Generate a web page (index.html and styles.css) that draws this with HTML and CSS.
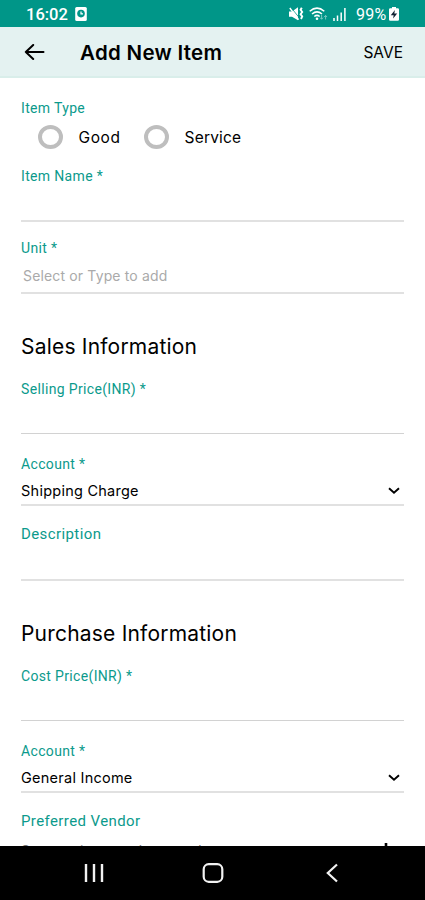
FILE: index.html
```html
<!DOCTYPE html>
<html lang="en">
<head>
<meta charset="utf-8">
<meta name="viewport" content="width=device-width, initial-scale=1">
<title>Add New Item</title>
<link rel="stylesheet" href="styles.css">
</head>
<body>
<div class="screen">
  <header class="status">
    <span class="clock">16:02</span>
    <svg class="alarm" width="12" height="14" viewBox="0 0 12 14"><rect x=".2" y="0" width="11.6" height="14" rx="1.5" fill="#fff"/><circle cx="6" cy="6.6" r="3.8" fill="#009688"/><path d="M6 4.4V6.8H8" fill="none" stroke="#fff" stroke-width="1.2"/></svg>
    <svg class="mute" width="15" height="14" viewBox="0 0 15 14"><path d="M0 4.5H3L9 .3V13.2L3 9.8H0Z" fill="#fff"/><path d="M2 .6L10.5 11" stroke="#009688" stroke-width=".8"/><path d="M.8 1L9.6 12.6" stroke="#fff" stroke-width="1.4"/><path d="M12.8 .8L11.6 2.8 13.2 5 11.6 7.2 13.2 9.4 12 12" fill="none" stroke="#fff" stroke-width="1.9"/></svg>
    <svg class="wifi" width="19" height="14" viewBox="0 0 19 14"><path d="M.7 4.3Q8 -2 15.3 4.3M3 7Q8 2.8 13 7M5.3 9.5Q8 7.2 10.7 9.5" fill="none" stroke="#fff" stroke-width="1.5"/><circle cx="8" cy="11.8" r="1.3" fill="#fff"/><path d="M12.6 8V12M11.2 10.7L12.6 12.3 14 10.7M16.6 12.5V8.5M15.2 10L16.6 8.4 18 10" fill="none" stroke="#79c8c0" stroke-width="1"/></svg>
    <svg class="signal" width="13" height="13" viewBox="0 0 13 13"><path d="M1 10V13M4.5 7.5V13M8.2 4.5V13M11.9 0V13" stroke="#fff" stroke-width="1.5"/></svg>
    <span class="charge">99%</span>
    <svg class="battery" width="10" height="14" viewBox="0 0 9 14" preserveAspectRatio="none"><path d="M2.7 0H6.3V1.3H7.8Q9 1.3 9 2.5V12.5Q9 13.7 7.8 13.7H1.2Q0 13.7 0 12.5V2.5Q0 1.3 1.2 1.3H2.7Z" fill="#fff"/><path d="M5.3 3L1.6 8.2H4.2L3.7 11.6 7.4 6.5H4.8Z" fill="#123"/></svg>
  </header>
  <div class="appbar">
    <svg class="back" width="21" height="18" viewBox="0 0 21 18"><path d="M19.5 8H1.8M9.2 1L1.8 8 9.2 15" fill="none" stroke="#000" stroke-width="2" stroke-linecap="round" stroke-linejoin="round"/></svg>
    <h1 class="title">Add New Item</h1>
    <button class="save">SAVE</button>
  </div>
  <main class="form">
    <div class="label type-label">Item Type</div>
    <div class="radios">
      <span class="radio"></span><span class="good">Good</span>
      <span class="radio"></span><span class="service">Service</span>
    </div>
    <div class="field name"><div class="label">Item Name *</div></div>
    <div class="field unit"><div class="label">Unit *</div><div class="value hint">Select or Type to add</div></div>
    <h2 class="sales">Sales Information</h2>
    <div class="field price"><div class="label">Selling Price(INR) *</div></div>
    <div class="field account"><div class="label">Account *</div><div class="value"><span class="shipping">Shipping Charge</span><svg width="12" height="8" viewBox="0 0 12 8"><path d="M1 1.3L6 5.8 11 1.3" fill="none" stroke="#000" stroke-width="1.9"/></svg></div></div>
    <div class="field description"><div class="label large">Description</div></div>
    <h2 class="purchase">Purchase Information</h2>
    <div class="field price"><div class="label">Cost Price(INR) *</div></div>
    <div class="field account"><div class="label">Account *</div><div class="value"><span class="income">General Income</span><svg width="12" height="8" viewBox="0 0 12 8"><path d="M1 1.3L6 5.8 11 1.3" fill="none" stroke="#000" stroke-width="1.9"/></svg></div></div>
    <div class="vendor"><div class="label large">Preferred Vendor</div><div class="value search"><span>Start typing to select vendor</span><svg width="14" height="14" viewBox="0 0 14 14"><path d="M7 0V14M0 7H14" stroke="#000" stroke-width="2.6"/></svg></div></div>
  </main>
  <nav class="navbar">
    <svg width="20" height="20" viewBox="0 0 20 20"><path d="M2 1V19M10 1V19M18 1V19" stroke="#f2f2f2" stroke-width="2.4"/></svg>
    <svg width="22" height="20" viewBox="0 0 22 20"><rect x="1.7" y="1.2" width="18.6" height="17.6" rx="5" fill="none" stroke="#f2f2f2" stroke-width="2.2"/></svg>
    <svg width="12" height="20" viewBox="0 0 12 20"><path d="M11 1.5L1.8 10 11 18.5" fill="none" stroke="#f2f2f2" stroke-width="2.2"/></svg>
  </nav>
</div>
</body>
</html>
```
FILE: styles.css
```css
* { box-sizing: border-box; }
body { margin: 0; background: #fff; color: #000; font-family: Roboto, sans-serif; }
svg { display: block; flex: none; }
.screen { height: 900px; display: flex; flex-direction: column; overflow: hidden; }
.status { flex: none; height: 27px; background: #009688; color: #fff; display: flex; align-items: center; padding: 1px 26px 0 26px; font-size: 16.5px; font-weight: 500; }
.clock { width: 49px; font-size: 16.5px; }
.mute { margin-left: auto; }
.wifi { margin-left: 5px; }
.signal { margin-left: 5px; }
.charge { margin-left: 10px; width: 32px; font-size: 16px; font-weight: 400; letter-spacing: .3px; white-space: nowrap; }
.battery { margin-left: 1px; }
.appbar { flex: none; height: 51px; background: #e4f2f1; border-bottom: 2px solid #d9eeea; display: flex; align-items: center; padding: 2px 22px 0 24px; }
.title { margin: 1px 0 0 35px; font: 600 20.5px/28px Inter, sans-serif; letter-spacing: .3px; }
.save { margin: 1px 0 0 auto; border: 0; padding: 0; background: none; font: 400 15.5px/24px Inter, sans-serif; color: #000; }
.form { flex: 1; min-height: 0; overflow: hidden; padding: 20px 21px 0; }
.label { height: 20px; line-height: 20px; font-size: 14px; letter-spacing: .34px; color: #0b9a8c; white-space: nowrap; }
.large { font-size: 15px; letter-spacing: .4px; }
.radios { display: flex; align-items: center; height: 24px; margin-top: 7px; padding-left: 17px; font: 400 15.5px/24px Inter, sans-serif; }
.radio { width: 25px; height: 24px; border: 4px solid #bebebe; border-radius: 50%; }
.good { width: 81px; padding: 2px 0 0 15.5px; letter-spacing: .6px; }
.service { padding: 2px 0 0 15.5px; letter-spacing: .2px; }
.field { border-bottom: 2px solid #e1e1e1; }
.name { height: 56px; margin-top: 17px; }
.unit { height: 56px; margin-top: 16px; }
.value { display: flex; align-items: center; justify-content: space-between; height: 20px; margin-top: 7px; padding-right: 4px; font: 400 14.5px/20px Inter, sans-serif; letter-spacing: .25px; white-space: nowrap; }
.unit .value { margin-top: 8px; padding-left: 2px; font-size: 14px; letter-spacing: .15px; }
.hint { color: #aaa; }
h2 { margin: 0; height: 26px; font: 400 21px/28px Inter, sans-serif; letter-spacing: .2px; white-space: nowrap; }
.sales { margin-top: 39px; }
.purchase { margin-top: 39px; }
.price { height: 55px; margin-top: 20px; border-bottom: 1px solid #d2d2d2; }
.account { height: 52px; margin-top: 20px; }
.description { height: 57px; margin-top: 18px; }
.vendor { margin-top: 18px; }
.vendor .value { margin-top: 9px; padding-right: 11px; font-size: 14px; color: #777; }
.vendor .value span { padding-top: 1px; }
.navbar { flex: none; height: 54px; background: #000; display: grid; grid-template-columns: repeat(3, 119px); justify-content: center; align-items: center; justify-items: center; }
```
